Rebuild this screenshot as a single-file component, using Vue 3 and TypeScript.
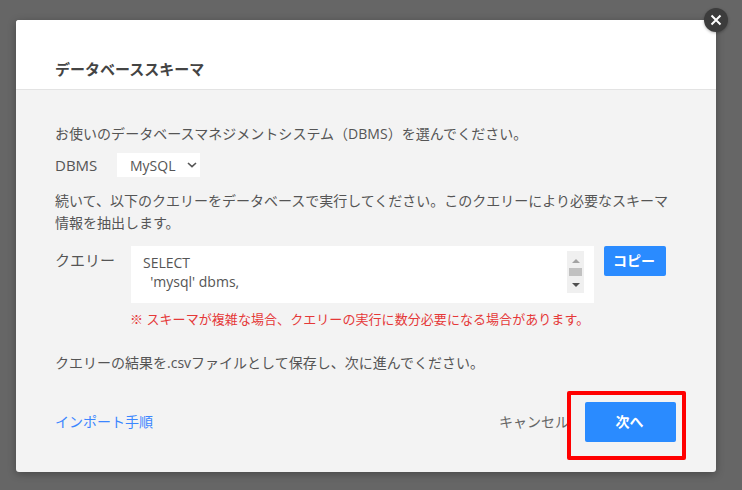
<script setup lang="ts">
const query = "SELECT\n  'mysql' dbms,";
const dbmsOptions: string[] = ['MySQL', 'PostgreSQL', 'Oracle'];
</script>

<template>
  <div class="backdrop">
    <section class="modal">
      <button class="close" aria-label="閉じる">
        <svg width="12" height="12" viewBox="0 0 12 12"><path d="M1.5 1.5l9 9M10.5 1.5l-9 9" stroke="#fff" stroke-width="2" fill="none" /></svg>
      </button>
      <header class="head"><h2>データベーススキーマ</h2></header>
      <div class="body">
        <p class="lead">お使いのデータベースマネジメントシステム（DBMS）を選んでください。</p>
        <div class="dbms">
          <label>DBMS</label>
          <div class="select-wrap">
            <select>
              <option v-for="o in dbmsOptions" :key="o">{{ o }}</option>
            </select>
            <svg class="chev" width="10" height="6" viewBox="0 0 10 6"><path d="M1 1l4 3.6L9 1" stroke="#555" stroke-width="1.6" fill="none" /></svg>
          </div>
        </div>
        <p class="desc">続いて、以下のクエリーをデータベースで実行してください。このクエリーにより必要なスキーマ情報を抽出します。</p>
        <div class="query">
          <span class="q-label">クエリー</span>
          <div class="q-box">
            <pre>{{ query }}</pre>
            <div class="scrollbar">
              <i class="up"></i>
              <i class="thumb"></i>
              <i class="down"></i>
            </div>
          </div>
          <button class="copy">コピー</button>
        </div>
        <p class="warn">※ スキーマが複雑な場合、クエリーの実行に数分必要になる場合があります。</p>
        <p class="save">クエリーの結果を.csvファイルとして保存し、次に進んでください。</p>
        <footer class="foot">
          <a class="link">インポート手順</a>
          <div class="actions">
            <span class="cancel">キャンセル</span>
            <button class="next">次へ</button>
            <span class="highlight"></span>
          </div>
        </footer>
      </div>
    </section>
  </div>
</template>

<style>
html, body { margin: 0; padding: 0; }
</style>

<style scoped>
* { box-sizing: border-box; }
.backdrop {
  width: 742px;
  height: 490px;
  background: #666;
  padding: 20px 26px 18px 16px;
  overflow: hidden;
  font-family: "Open Sans", "Noto Sans CJK JP", sans-serif;
  font-size: 14px;
  color: #555;
}
.modal {
  position: relative;
  width: 700px;
  height: 452px;
  border-radius: 3px;
  background: #f3f3f3;
  box-shadow: 0 2px 8px rgba(0, 0, 0, 0.3);
  display: flex;
  flex-direction: column;
}
.close {
  position: absolute;
  top: -12px;
  right: -12px;
  width: 24px;
  height: 24px;
  border: 0;
  padding: 0;
  border-radius: 50%;
  background: #3c3c3c;
  box-shadow: 0 1px 3px rgba(0, 0, 0, 0.3);
  display: flex;
  align-items: center;
  justify-content: center;
}
.head {
  height: 70px;
  flex: none;
  background: #fff;
  border-bottom: 1px solid #e3e3e3;
  border-radius: 3px 3px 0 0;
  padding: 37px 40px 0 39px;
}
h2 {
  margin: 0;
  font-size: 15px;
  line-height: 24px;
  font-weight: 700;
  color: #444;
}
.body {
  flex: 1;
  padding: 24px 40px 0 39px;
  display: flex;
  flex-direction: column;
}
p { margin: 0; }
.lead { line-height: 24px; height: 24px; margin-top: 8px; letter-spacing: 0.03px; }
.dbms {
  display: flex;
  align-items: center;
  height: 24px;
  margin-top: 7px;
}
.dbms label { width: 62px; font-size: 15px; }
.select-wrap { position: relative; width: 83px; height: 24px; }
select {
  appearance: none;
  width: 100%;
  height: 100%;
  border: 0;
  border-radius: 0;
  background: #fff;
  color: #555;
  font: inherit;
  padding: 0 0 0 13px;
}
.chev { position: absolute; right: 3px; top: 9px; pointer-events: none; }
.desc { line-height: 22px; margin-top: 13px; width: 621px; }
.query { display: flex; align-items: flex-start; margin-top: 12px; }
.q-label { width: 76px; line-height: 28px; font-size: 15px; }
.q-box {
  width: 463px;
  height: 57px;
  background: #fff;
  padding: 5px 10px 0 12px;
  display: flex;
  justify-content: space-between;
  align-items: flex-start;
}
pre {
  margin: 2px 0 0;
  font: inherit;
  line-height: 19px;
}
.scrollbar {
  width: 17px;
  height: 42px;
  background: #f0f0f0;
  display: flex;
  flex-direction: column;
  align-items: center;
  padding-top: 8px;
}
.scrollbar i { display: block; }
.up { width: 0; height: 0; border: 4px solid transparent; border-top: 0; border-bottom: 4px solid #a3a3a3; }
.thumb { width: 13px; height: 8px; background: #c1c1c1; margin: 5px 0 7px; }
.down { width: 0; height: 0; border: 4px solid transparent; border-bottom: 0; border-top: 4px solid #505050; }
.copy {
  width: 62px;
  height: 30px;
  margin-left: 10px;
  border: 0;
  border-radius: 2px;
  background: #2a8bff;
  color: #fff;
  font: inherit;
  font-weight: 700;
  padding: 0 2px 2px 0;
}
.warn { color: #e53838; font-size: 13px; letter-spacing: 0.06px; margin-left: 75px; margin-top: 5px; line-height: 22px; }
.save { margin-top: 22px; line-height: 22px; }
.foot {
  display: flex;
  justify-content: space-between;
  align-items: center;
  margin-top: 28px;
  height: 40px;
}
.link { color: #3b86ff; margin-bottom: 2px; }
.actions { position: relative; display: flex; align-items: center; }
.cancel { color: #666; margin-right: 16px; margin-bottom: 2px; }
.next {
  width: 91px;
  height: 40px;
  border: 0;
  border-radius: 2px;
  background: #2a8bff;
  color: #fff;
  font: inherit;
  font-weight: 700;
  padding: 0 2px 3px 0;
}
.highlight {
  position: absolute;
  left: calc(100% - 109px);
  top: -11px;
  width: 119px;
  height: 69px;
  border: 4px solid #f00;
  border-radius: 2px;
}
</style>
